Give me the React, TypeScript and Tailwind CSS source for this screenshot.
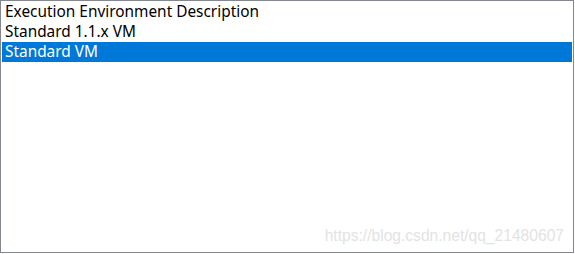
export default function App() {
  const rows = ['Execution Environment Description', 'Standard 1.1.x VM', 'Standard VM']
  const selected = 2

  return (
    <div className="w-[575px] h-[254px] bg-white">
      <div className="relative w-[574px] h-[253px] border border-[#828790] bg-white p-px font-['Noto_Sans',sans-serif]">
        <ul>
          {rows.map((row, i) => (
            <li
              key={row}
              className={`h-5 pl-[3px] text-[15.4px] leading-5 ${
                i === selected ? 'bg-[#0078d7] text-white' : 'text-black'
              }`}
            >
              {row}
            </li>
          ))}
        </ul>
        <span className="absolute right-[9px] bottom-[7px] text-[15.6px] leading-[18px] text-[#e3e3e3] font-['Liberation_Sans',sans-serif]">
          https://blog.csdn.net/qq_21480607
        </span>
      </div>
    </div>
  )
}
